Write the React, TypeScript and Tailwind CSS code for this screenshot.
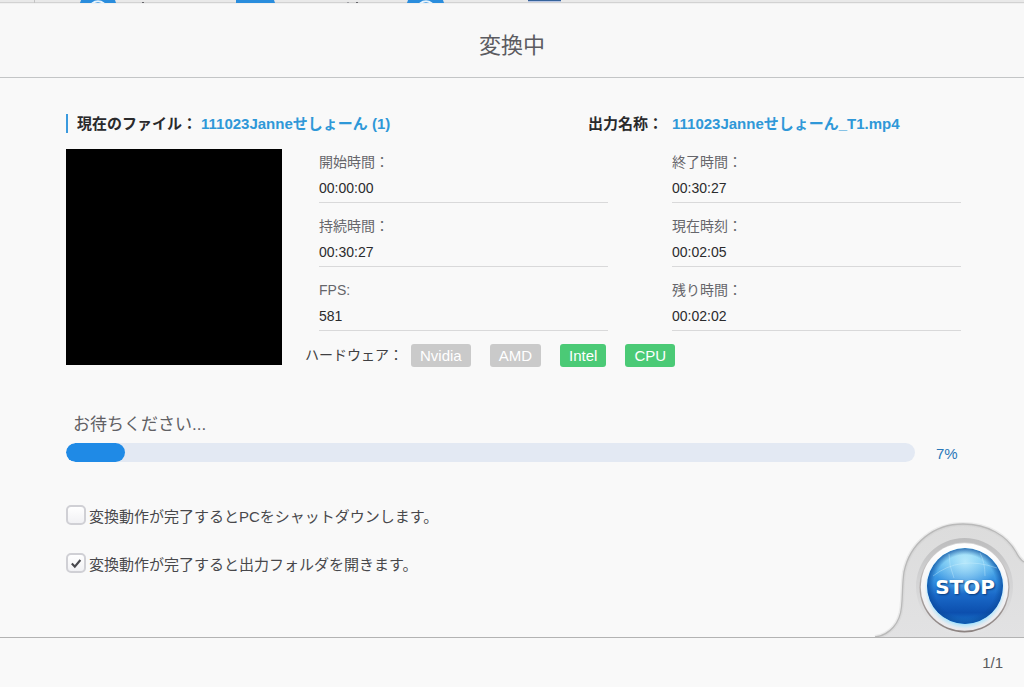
import React from "react";

type Detail = { label: string; value: string };

const leftDetails: Detail[] = [
  { label: "開始時間：", value: "00:00:00" },
  { label: "持続時間：", value: "00:30:27" },
  { label: "FPS:", value: "581" },
];

const rightDetails: Detail[] = [
  { label: "終了時間：", value: "00:30:27" },
  { label: "現在時刻：", value: "00:02:05" },
  { label: "残り時間：", value: "00:02:02" },
];

const hardware = [
  { name: "Nvidia", active: false },
  { name: "AMD", active: false },
  { name: "Intel", active: true },
  { name: "CPU", active: true },
];

const progress = 7;

function DetailColumn({ items }: { items: Detail[] }) {
  return (
    <dl className="flex flex-1 flex-col gap-[10px] text-[14px]">
      {items.map((item) => (
        <div key={item.label} className="border-b border-[#d9d9da] pb-px">
          <dt className="leading-[26px] text-[#66666b]">{item.label}</dt>
          <dd className="leading-[26px] text-[#2b2b2d]">{item.value}</dd>
        </div>
      ))}
    </dl>
  );
}

function Option({ label, checked }: { label: string; checked: boolean }) {
  return (
    <label className="flex h-5 gap-[3px] text-[15px] text-[#48484b]">
      <span className="relative h-5 w-5 shrink-0">
        <input
          type="checkbox"
          defaultChecked={checked}
          className="peer block h-5 w-5 appearance-none rounded-[5px] border-2 border-[#d0d0d5] bg-gradient-to-b from-white to-[#f1f1f4]"
        />
        <svg
          viewBox="0 0 20 20"
          aria-hidden="true"
          className="pointer-events-none absolute inset-0 hidden h-5 w-5 peer-checked:block"
        >
          <path d="M5.8 10.6 8.8 13.6 14.4 7" fill="none" stroke="#48484d" strokeWidth="2.1" />
        </svg>
      </span>
      <span className="leading-6">{label}</span>
    </label>
  );
}

function TopStrip() {
  return (
    <svg className="block h-1 w-full shrink-0 bg-[#e9e9e9]" aria-hidden="true">
      <rect y="2" width="100%" height="1" fill="#d2d2d2" />
      <rect y="3" width="100%" height="1" fill="#f0f0f0" />
      <rect x="34" width="1" height="3" fill="#c4c4c4" />
      <path d="M81 0H115L116 3H80Z" fill="#2a8ddd" />
      <path d="M92 3.5Q98 -1 104 3.5" fill="none" stroke="#e8f3fb" strokeWidth="2" />
      <rect x="142" y="2" width="2" height="1" fill="#66666b" />
      <path d="M236 0H274L275 3H236Z" fill="#2a8ddd" />
      <rect x="347" y="2" width="2" height="1" fill="#a0a0a4" />
      <rect x="356" y="2" width="2" height="1" fill="#66666b" />
      <path d="M408 0H443L444 3H407Z" fill="#2a8ddd" />
      <path d="M420 3.5Q426 -1 432 3.5" fill="none" stroke="#e8f3fb" strokeWidth="2" />
      <rect x="528" width="33" height="1" fill="#36639c" />
      <rect x="528" y="1" width="33" height="1" fill="#b9c6e4" />
    </svg>
  );
}

function StopButton() {
  return (
    <button
      type="button"
      className="absolute right-0 bottom-0 flex h-[115px] w-[154px] cursor-pointer"
    >
      <svg viewBox="0 0 154 115" className="absolute inset-0 h-full w-full" aria-hidden="true">
        <defs>
          <linearGradient id="dome" x1="0" y1="0" x2="0" y2="1">
            <stop offset="0" stopColor="#dcdcdc" />
            <stop offset="1" stopColor="#e2e2e3" />
          </linearGradient>
          <linearGradient id="groove" x1="0" y1="0" x2="0" y2="1">
            <stop offset="0" stopColor="#bcbcbd" />
            <stop offset="0.4" stopColor="#d2d2d3" />
            <stop offset="1" stopColor="#e4e4e5" />
          </linearGradient>
          <linearGradient id="rim" x1="0" y1="0" x2="0" y2="1">
            <stop offset="0" stopColor="#d8d8d8" />
            <stop offset="0.5" stopColor="#b0a9a8" />
            <stop offset="1" stopColor="#8b8280" />
          </linearGradient>
          <linearGradient id="ring" x1="0" y1="0" x2="0" y2="1">
            <stop offset="0" stopColor="#ffffff" />
            <stop offset="1" stopColor="#e9e9ec" />
          </linearGradient>
          <linearGradient id="ball" x1="0" y1="0" x2="0" y2="1">
            <stop offset="0" stopColor="#79d4f8" />
            <stop offset="0.22" stopColor="#5ab6ee" />
            <stop offset="0.45" stopColor="#2f8cdf" />
            <stop offset="0.62" stopColor="#1a69c8" />
            <stop offset="0.85" stopColor="#0c4fae" />
            <stop offset="1" stopColor="#1b78cf" />
          </linearGradient>
          <radialGradient id="glow" cx="0.5" cy="0.5" r="0.5">
            <stop offset="0.84" stopColor="#8fdcff" />
            <stop offset="1" stopColor="#a8e6ff" stopOpacity="0" />
          </radialGradient>
          <radialGradient id="shade" cx="0.5" cy="0.5" r="0.5">
            <stop offset="0.82" stopColor="#0a4a9c" stopOpacity="0" />
            <stop offset="1" stopColor="#0a4a9c" stopOpacity="0.75" />
          </radialGradient>
          <radialGradient id="shine" cx="0.5" cy="0.18" r="0.42">
            <stop offset="0" stopColor="#d2f7ff" stopOpacity="0.75" />
            <stop offset="1" stopColor="#d2f7ff" stopOpacity="0" />
          </radialGradient>
          <clipPath id="ballClip">
            <circle cx="95" cy="64" r="38" />
          </clipPath>
        </defs>
        <path
          d="M5 115C20 113 30 101 31.5 85C33 71 32 64 34 50C40 21 64 2 93 2C118 2 137 14 146 30C149 36 151 38 154 40V115Z"
          fill="url(#dome)"
        />
        <path
          d="M5 115C20 113 30 101 31.5 85C33 71 32 64 34 50C40 21 64 2 93 2C118 2 137 14 146 30C149 36 151 38 154 40"
          fill="none"
          stroke="#c6c6c6"
          strokeWidth="4"
          strokeOpacity="0.3"
        />
        <path
          d="M5 115C20 113 30 101 31.5 85C33 71 32 64 34 50C40 21 64 2 93 2C118 2 137 14 146 30C149 36 151 38 154 40"
          fill="none"
          stroke="#b9b9b9"
          strokeWidth="1.3"
        />
        <circle cx="94.5" cy="64.5" r="48.5" fill="url(#groove)" />
        <circle cx="94.5" cy="65.5" r="45" fill="url(#rim)" />
        <circle cx="94.5" cy="65" r="43.8" fill="url(#ring)" />
        <circle cx="95" cy="66.5" r="40.5" fill="url(#glow)" />
        <circle cx="95" cy="64" r="38" fill="url(#ball)" />
        <g clipPath="url(#ballClip)">
          <circle cx="95" cy="64" r="38" fill="url(#shine)" />
          <circle cx="95" cy="64" r="38" fill="url(#shade)" />
          <path
            d="M79 32Q79 44 84 56M110 31Q115 40 115 54M63 54Q90 33 127 46"
            fill="none"
            stroke="#d4f3ff"
            strokeOpacity="0.35"
          />
        </g>
      </svg>
      <span className="relative mt-[53px] ml-[65px] w-[60px] text-center font-['DejaVu_Sans'] text-[20px] leading-6 font-bold text-white [text-shadow:1px_1px_2px_#063a7c]">
        STOP
      </span>
    </button>
  );
}

export default function App() {
  return (
    <div
      lang="ja"
      className="flex min-h-screen flex-col bg-[#f9f9f9] font-['Liberation_Sans','Noto_Sans_CJK_JP',sans-serif]"
    >
      <TopStrip />
      <header className="flex h-[74px] items-center justify-center border-b border-[#c3c5c6] bg-[#f8f8f8] pt-[10px]">
        <h1 className="text-[22px] leading-8 text-[#5b5b60]">変換中</h1>
      </header>

      <main className="relative flex-1 pt-9 pr-[63px] pb-16 pl-[66px]">
        <div className="flex h-[19px] items-center justify-between text-[15px] leading-[19px] font-bold">
          <p className="flex gap-1 border-l-2 border-[#3b9ade] pl-[9px]">
            <span className="text-[#2a2a2c]">現在のファイル：</span>
            <span className="text-[#2f98d8]">111023Janneせしょーん (1)</span>
          </p>
          <p className="flex w-[373px] gap-[9px]">
            <span className="text-[#2a2a2c]">出力名称：</span>
            <span className="text-[#2f98d8]">111023Janneせしょーん_T1.mp4</span>
          </p>
        </div>

        <section className="mt-4 flex items-start gap-[37px]">
          <div className="h-[216px] w-[216px] shrink-0 bg-black" />
          <div className="flex-1">
            <div className="flex gap-16">
              <DetailColumn items={leftDetails} />
              <DetailColumn items={rightDetails} />
            </div>
            <div className="mt-[13px] -ml-[14px] flex h-[23px] items-center">
              <span className="w-[106px] text-[14px] text-[#3f3f42]">ハードウェア：</span>
              <ul className="flex gap-[19px] text-[15px] leading-[23px] text-white">
                {hardware.map((item) => (
                  <li
                    key={item.name}
                    className={
                      item.active
                        ? "rounded-[3px] bg-[#4bca76] px-[9px]"
                        : "rounded-[3px] bg-[#cacaca] px-[9px]"
                    }
                  >
                    {item.name}
                  </li>
                ))}
              </ul>
            </div>
          </div>
        </section>

        <section className="mt-[46px]">
          <p id="status" className="pl-[7px] text-[17px] leading-6 text-[#606064]">
            お待ちください...
          </p>
          <div className="mt-[6px] flex items-center gap-[21px]">
            <div
              role="progressbar"
              aria-labelledby="status"
              aria-valuenow={progress}
              aria-valuemin={0}
              aria-valuemax={100}
              className="h-[19px] flex-1 overflow-hidden rounded-full bg-[#e3e9f3]"
            >
              <div
                className="h-full rounded-full bg-[#1f8ae6]"
                style={{ width: `${progress}%` }}
              />
            </div>
            <span className="w-[25px] pt-[2px] text-[15px] leading-[17px] text-[#2a78b8]">
              {progress}%
            </span>
          </div>
        </section>

        <div className="mt-[43px] flex flex-col items-start gap-7">
          <Option label="変換動作が完了するとPCをシャットダウンします。" checked={false} />
          <Option label="変換動作が完了すると出力フォルダを開きます。" checked={true} />
        </div>

        <StopButton />
      </main>

      <footer className="flex h-[50px] items-center justify-end border-t border-[#b3b3b3] pt-px pr-[21px] text-[15px] text-[#5b5b5e]">
        1/1
      </footer>
    </div>
  );
}
